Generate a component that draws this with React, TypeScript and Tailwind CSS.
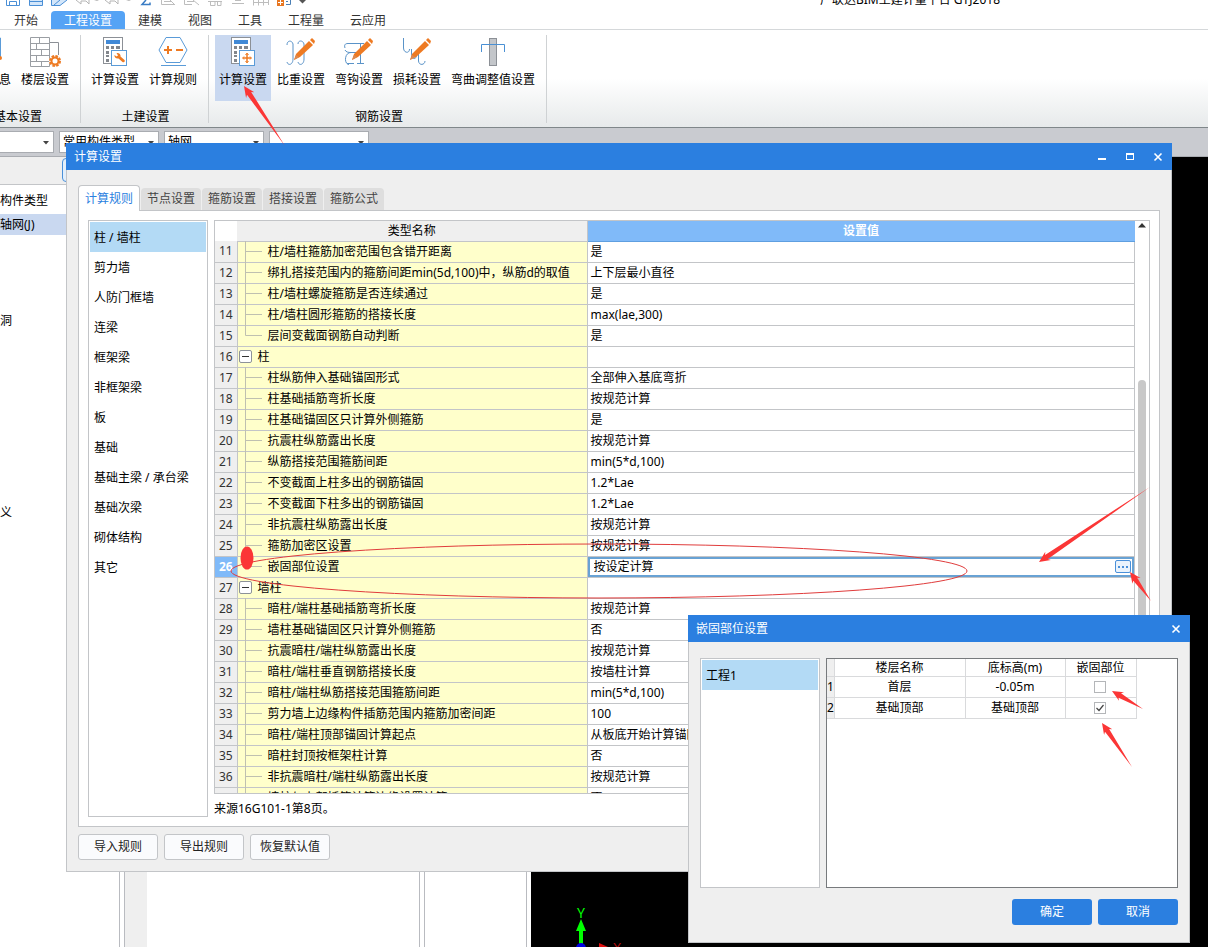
import { useState } from 'react';

interface SettingRow {
  no: number;
  name: string;
  value: string;
  group?: boolean;
  last?: boolean;
}

interface Point {
  x: number;
  y: number;
}

const menus = ['开始', '工程设置', '建模', '视图', '工具', '工程量', '云应用'];
const tabs = ['计算规则', '节点设置', '箍筋设置', '搭接设置', '箍筋公式'];
const categories = [
  '柱 / 墙柱',
  '剪力墙',
  '人防门框墙',
  '连梁',
  '框架梁',
  '非框架梁',
  '板',
  '基础',
  '基础主梁 / 承台梁',
  '基础次梁',
  '砌体结构',
  '其它',
];

const rows: SettingRow[] = [
  { no: 11, name: '柱/墙柱箍筋加密范围包含错开距离', value: '是' },
  { no: 12, name: '绑扎搭接范围内的箍筋间距min(5d,100)中，纵筋d的取值', value: '上下层最小直径' },
  { no: 13, name: '柱/墙柱螺旋箍筋是否连续通过', value: '是' },
  { no: 14, name: '柱/墙柱圆形箍筋的搭接长度', value: 'max(lae,300)' },
  { no: 15, name: '层间变截面钢筋自动判断', value: '是', last: true },
  { no: 16, name: '柱', value: '', group: true },
  { no: 17, name: '柱纵筋伸入基础锚固形式', value: '全部伸入基底弯折' },
  { no: 18, name: '柱基础插筋弯折长度', value: '按规范计算' },
  { no: 19, name: '柱基础锚固区只计算外侧箍筋', value: '是' },
  { no: 20, name: '抗震柱纵筋露出长度', value: '按规范计算' },
  { no: 21, name: '纵筋搭接范围箍筋间距', value: 'min(5*d,100)' },
  { no: 22, name: '不变截面上柱多出的钢筋锚固', value: '1.2*Lae' },
  { no: 23, name: '不变截面下柱多出的钢筋锚固', value: '1.2*Lae' },
  { no: 24, name: '非抗震柱纵筋露出长度', value: '按规范计算' },
  { no: 25, name: '箍筋加密区设置', value: '按规范计算' },
  { no: 26, name: '嵌固部位设置', value: '按设定计算', last: true },
  { no: 27, name: '墙柱', value: '', group: true },
  { no: 28, name: '暗柱/端柱基础插筋弯折长度', value: '按规范计算' },
  { no: 29, name: '墙柱基础锚固区只计算外侧箍筋', value: '否' },
  { no: 30, name: '抗震暗柱/端柱纵筋露出长度', value: '按规范计算' },
  { no: 31, name: '暗柱/端柱垂直钢筋搭接长度', value: '按墙柱计算' },
  { no: 32, name: '暗柱/端柱纵筋搭接范围箍筋间距', value: 'min(5*d,100)' },
  { no: 33, name: '剪力墙上边缘构件插筋范围内箍筋加密间距', value: '100' },
  { no: 34, name: '暗柱/端柱顶部锚固计算起点', value: '从板底开始计算锚固' },
  { no: 35, name: '暗柱封顶按框架柱计算', value: '否' },
  { no: 36, name: '非抗震暗柱/端柱纵筋露出长度', value: '按规范计算' },
  { no: 37, name: '墙柱与上部插筋计算边缘设置计算', value: '否' },
];

/* ---------- icons ---------- */

function QuickIcons() {
  return (
    <svg width="310" height="10" viewBox="0 0 310 10" className="shrink-0" fill="none" aria-hidden="true">
      <path d="M6.500 0V5.500H19.500V0M9.500 5V1.500H16.500V5" stroke="#4a8fd6" />
      <path d="M29.500 0V5.500H42.500V0" fill="#d3e6fa" stroke="#4a8fd6" />
      <path d="M29 1.500H43" stroke="#4a8fd6" />
      <path d="M51.500 0V5.500H60L67 0M54 5L60 0" fill="#d3e6fa" stroke="#4a8fd6" />
      <path d="M76 0L81 4V1H86L89 4V0" stroke="#b5b5b5" />
      <path d="M105 0L110 4V1H115L118 4V0" stroke="#b5b5b5" />
      <path d="M94 0h5l-2 1zM126 0h5l-2 1z" fill="#b5b5b5" />
      <path d="M146 0L142 4.500H150V2.500" stroke="#3a7cc4" strokeWidth="1.500" />
      <path d="M161.500 0V4.500H174M164 1.500H171M170 0L175 5M184.500 0V4.500H192M187 1.500H194M193 0L199 5" stroke="#bdbdbd" />
      <path d="M208 1.500H222M210.500 2V5.500H215V2M217.500 2V5.500H221V2M232 3.500H244M235 0.500H241M253.500 0V5.500M258.500 0V5.500M263.500 0V5.500M253 2.500H268M268.500 0V5" stroke="#bdbdbd" />
      <rect x="277" y="0" width="7" height="6" fill="#e87722" />
      <path d="M278 2.500H283M280.500 0V5" stroke="#fff" />
      <path d="M286 4.500H290.500V0M286 1.500H288" stroke="#4a7fb5" />
      <path d="M299 0H306L302.500 3.500Z" fill="#555" />
    </svg>
  );
}

function CalcIcon({ badge }: { badge: 'wrench' | 'move' }) {
  return (
    <svg width="32" height="32" viewBox="0 0 32 32" fill="none" aria-hidden="true">
      <rect x="4.500" y="2.500" width="19" height="26" fill="#fff" stroke="#8c9096" />
      <rect x="7" y="5" width="14" height="4" fill="#4189d6" />
      <path d="M7 11h3v3H7zM12 11h3v3h-3zM17 11h4v3h-4zM7 16h3v3H7zM12 16h3v3h-3zM7 20h3v2H7zM7 24h3v3H7z" fill="#82868c" />
      <rect x="12.500" y="15.500" width="15" height="15" fill="#fff" stroke="#5a9bd8" />
      {badge === 'wrench' ? (
        <path
          d="M17.500 18C20 17.500 22 19.500 21.500 21.500L25.500 25C26.500 26.500 25 28 23.500 27L19.500 23.500C17 24 15 22 15.500 20L17.500 21.500L19 20.500Z"
          fill="#ee7a22"
        />
      ) : (
        <g stroke="#ee7a22" strokeWidth="1.500">
          <path d="M20 19v8M16 23h8" />
          <path d="M18.500 20l1.500-2 1.500 2M18.500 26l1.500 2 1.500-2M17 21.500l-1.500 1.500 1.500 1.500M23 21.500l1.500 1.500-1.500 1.500" strokeWidth="1" />
        </g>
      )}
    </svg>
  );
}

function FloorIcon() {
  return (
    <svg width="32" height="32" viewBox="0 0 32 32" fill="none" aria-hidden="true">
      <path d="M1.500 2.500H20.500V31.500H1.500ZM1 8.500H20M1 14.500H20M1 20.500H20M1 26.500H20M10.500 2V8M7.500 8V14M12.500 14V20M7.500 20V26M12.500 26V31" stroke="#9a9ea3" />
      <path d="M21 7.500H29.500V20" stroke="#8c9096" />
      <circle cx="26" cy="26" r="6" fill="#f6f7f8" />
      <circle cx="26" cy="26" r="5" stroke="#ee7a22" strokeWidth="2" strokeDasharray="2.500 1.400" />
      <circle cx="26" cy="26" r="3.500" fill="#fff" stroke="#ee7a22" strokeWidth="2" />
    </svg>
  );
}

function RuleIcon() {
  return (
    <svg width="32" height="32" viewBox="0 0 32 32" fill="none" aria-hidden="true">
      <path d="M9 2.500H23L30 15L23 27.500H9L2 15ZM4 30.500H29" stroke="#5a9bd8" />
      <path d="M7 15H15M11 11V19M19 15H26" stroke="#ee7a22" strokeWidth="2" />
    </svg>
  );
}

function PencilIcon({ curve }: { curve: string }) {
  return (
    <svg width="32" height="32" viewBox="0 0 32 32" fill="none" aria-hidden="true">
      <path d={curve} stroke="#5a93c8" />
      <path d="M9 25L11 19L24 6L28 10L15 22Z" fill="#ee7a22" />
      <path d="M25 5L27 3L30 6L29 9Z" fill="#ee7a22" />
      <path d="M9 25L11 20L14 22Z" fill="#d98a55" />
    </svg>
  );
}

function BendIcon() {
  return (
    <svg width="32" height="32" viewBox="0 0 32 32" fill="none" aria-hidden="true">
      <rect x="12.500" y="3.500" width="7" height="27" fill="#c3c6ca" stroke="#8c9096" />
      <path d="M4.500 17V9.500H27.500V17" stroke="#4a90d4" />
    </svg>
  );
}

function ToolIcon({ name }: { name: string }) {
  switch (name) {
    case '楼层设置':
      return <FloorIcon />;
    case '计算规则':
      return <RuleIcon />;
    case '比重设置':
      return (
        <PencilIcon curve="M2 10C2 5 7 5 8 9V24C8 30 3 31 2 27M13 9C13 5 18 5 19 9V24C19 30 14 31 13 27" />
      );
    case '弯钩设置':
      return (
        <PencilIcon curve="M2 13C1 10 2 8.500 5 8.500H21M2 15C3 17 5 17.500 8 17.500H14M8 17.500C1 17.500 1 29.500 6 29.500M4 28.500H11M14 28.500H21M17.500 9V28" />
      );
    case '损耗设置':
      return <PencilIcon curve="M2.500 3V13C2.500 18 8.500 19 8.500 14M10.500 14V18C10.500 25 15 25 16 20M17.500 18V26C18 31 24 30 24 26" />;
    case '弯曲调整值设置':
      return <BendIcon />;
    default:
      return null;
  }
}

function CloseIcon() {
  return (
    <svg width="10" height="10" viewBox="0 0 10 10" fill="none" stroke="#fff" strokeWidth="1.600" aria-hidden="true">
      <path d="M1.500 1.500L8.500 8.500M8.500 1.500L1.500 8.500" />
    </svg>
  );
}

/* ---------- ribbon ---------- */

function ToolButton({ label, badge, active }: { label: string; badge?: 'wrench' | 'move'; active?: boolean }) {
  return (
    <button
      className={`flex h-[66px] min-w-14 shrink-0 flex-col items-center px-1 text-black ${active ? 'bg-[#c9d8f0]' : ''}`}
    >
      {badge ? <CalcIcon badge={badge} /> : <ToolIcon name={label} />}
      <span className="mt-[5px] leading-4 whitespace-nowrap">{label}</span>
    </button>
  );
}

function Ribbon() {
  return (
    <div className="flex h-[98px] shrink-0 border-b border-[#80878a] bg-linear-to-b from-white from-50% to-[#e7eaeb] pt-[5px] pb-1 text-black">
      <div className="flex w-[81px] justify-end overflow-hidden border-r border-[#cfd2d4]">
        <div className="flex w-[124px] shrink-0 flex-col">
          <div className="flex gap-[2px] pl-[3px]">
            <button className="flex h-[66px] w-14 flex-col items-center">
              <svg width="32" height="32" viewBox="0 0 32 32" fill="none" aria-hidden="true">
                <path d="M4 3H29.500V22H4" stroke="#5a9bd8" />
                <circle cx="29" cy="23" r="2" fill="#ee7a22" />
              </svg>
              <span className="mt-[5px] leading-4">工程信息</span>
            </button>
            <ToolButton label="楼层设置" />
          </div>
          <span className="mt-2 text-center leading-4">基本设置</span>
        </div>
      </div>
      <div className="flex w-32 flex-col border-r border-[#cfd2d4] pl-[6px]">
        <div className="flex gap-[2px]">
          <ToolButton label="计算设置" badge="wrench" />
          <ToolButton label="计算规则" />
        </div>
        <span className="mt-2 pr-1 text-center leading-4">土建设置</span>
      </div>
      <div className="flex flex-col border-r border-[#cfd2d4] pr-[7px] pl-[6px]">
        <div className="flex gap-[2px]">
          <ToolButton label="计算设置" badge="move" active />
          <ToolButton label="比重设置" />
          <ToolButton label="弯钩设置" />
          <ToolButton label="损耗设置" />
          <ToolButton label="弯曲调整值设置" />
        </div>
        <span className="mt-2 pl-1 text-center leading-4">钢筋设置</span>
      </div>
    </div>
  );
}

function Combo({ label, value, width }: { label: string; value: string; width: string }) {
  return (
    <div className={`relative h-[22px] shrink-0 border border-[#a9acb1] bg-white ${width}`}>
      <select aria-label={label} className="h-full w-full appearance-none bg-transparent pl-[3px] text-black">
        <option>{value}</option>
      </select>
      <svg width="6" height="4" viewBox="0 0 6 4" className="pointer-events-none absolute top-[9px] right-1" aria-hidden="true">
        <path d="M0 0H6L3 3.500Z" fill="#444" />
      </svg>
    </div>
  );
}

/* ---------- main dialog ---------- */

function SettingTable() {
  return (
    <table className="w-full table-fixed border-collapse text-black">
      <colgroup>
        <col className="w-[22px]" />
        <col className="w-[350px]" />
        <col />
      </colgroup>
      <thead>
        <tr className="h-5">
          <th className="bg-white p-0"></th>
          <th className="border-r border-b border-[#c3c5c8] bg-[#efefef] p-0 leading-4 font-normal">类型名称</th>
          <th className="border-b border-[#5f9fe0] bg-[#80baf9] p-0 leading-4 font-bold text-white">设置值</th>
        </tr>
      </thead>
      <tbody>
        {rows.map((row) => {
          const selected = row.no === 26;
          return (
            <tr key={row.no} className="h-[21px]">
              <td
                className={`border-r border-b border-[#c3c5c8] p-0 text-center leading-4 ${
                  selected ? 'bg-[#80baf9] font-bold text-white' : 'bg-[#efefef] text-[#333]'
                }`}
              >
                {row.no}
              </td>
              <td className="border-r border-b border-[#c3c5c8] bg-[#ffffcb] p-0">
                <div className="flex h-5 items-center">
                  {row.group ? (
                    <button
                      aria-label={`收起${row.name}`}
                      className="mr-[6px] ml-px flex h-[13px] w-[13px] items-center justify-center rounded-[2px] border border-[#8d9299] bg-white"
                    >
                      <span className="h-px w-[7px] bg-[#333]" />
                    </button>
                  ) : (
                    <svg width="30" height="21" viewBox="0 0 30 21" fill="none" className="shrink-0" aria-hidden="true">
                      <path d={row.last ? 'M7.500 0V10.500H24' : 'M7.500 0V21M7.500 10.500H24'} stroke="#bfc0b0" />
                    </svg>
                  )}
                  <span className="leading-4 whitespace-nowrap">{row.name}</span>
                </div>
              </td>
              <td className="border-r border-b border-[#c3c5c8] bg-white p-0">
                {selected ? (
                  <div className="flex h-5 items-center border-2 border-[#68a2d4] pr-px">
                    <input
                      aria-label={row.name}
                      defaultValue={row.value}
                      className="h-4 min-w-0 flex-1 bg-transparent pl-1 outline-none"
                    />
                    <button
                      aria-label="更多"
                      className="flex h-[13px] w-4 items-center justify-center gap-[2px] rounded-[2px] border border-[#4a90d9] bg-[#eaf3fc]"
                    >
                      <span className="h-[2px] w-[2px] bg-[#4a90d9]" />
                      <span className="h-[2px] w-[2px] bg-[#4a90d9]" />
                      <span className="h-[2px] w-[2px] bg-[#4a90d9]" />
                    </button>
                  </div>
                ) : (
                  <div className="h-4 pl-[3px] leading-4 whitespace-nowrap">{row.value}</div>
                )}
              </td>
            </tr>
          );
        })}
      </tbody>
    </table>
  );
}

function CalcDialog() {
  const [tab, setTab] = useState(0);
  const [category, setCategory] = useState(0);

  return (
    <section className="absolute top-[143px] right-9 left-[66px] border-r border-b border-l border-[#c3c5c8] bg-[#efefef]">
      <header className="-mx-px flex h-[27px] items-center bg-[#2b7fe0] pl-2 text-white">
        <h2 className="flex-1">计算设置</h2>
        <button aria-label="最小化" className="flex h-full w-7 items-center justify-center">
          <span className="mt-1 h-[2px] w-2 bg-white" />
        </button>
        <button aria-label="最大化" className="flex h-full w-7 items-center justify-center">
          <span className="h-[7px] w-2 border border-t-2 border-white" />
        </button>
        <button aria-label="关闭" className="flex h-full w-7 items-center justify-center">
          <CloseIcon />
        </button>
      </header>

      <div className="px-[11px] pt-[15px] pb-[11px]">
        <div className="flex items-end gap-px" role="tablist">
          {tabs.map((item, i) => (
            <button
              key={item}
              role="tab"
              aria-selected={i === tab}
              onClick={() => setTab(i)}
              className={
                i === tab
                  ? 'z-10 -mb-px h-[26px] w-[62px] rounded-t-sm border border-b-0 border-[#c3c5c8] bg-white text-[#2b7fe0]'
                  : 'h-[22px] w-[60px] rounded-t-sm bg-[#dedede] text-[#444]'
              }
            >
              {item}
            </button>
          ))}
        </div>

        <div className="flex border border-[#c3c5c8] bg-white p-[9px]">
          <ul className="w-[120px] shrink-0 border border-[#c3c5c8] p-px">
            {categories.map((item, i) => (
              <li key={item}>
                <button
                  onClick={() => setCategory(i)}
                  className={`h-[30px] w-full pt-0.5 pl-1 text-left whitespace-nowrap text-black ${
                    i === category ? 'bg-[#b3daf5]' : ''
                  }`}
                >
                  {item}
                </button>
              </li>
            ))}
          </ul>
          <div className="ml-[6px] min-w-0 flex-1">
            <div className="flex h-[574px] border border-[#c3c5c8]">
              <div className="min-w-0 flex-1 overflow-hidden">
                <SettingTable />
              </div>
              <div className="flex w-[14px] flex-col items-center">
                <svg width="8" height="5" viewBox="0 0 8 5" className="mt-[2px]" aria-hidden="true">
                  <path d="M0 4.500L4 0L8 4.500Z" fill="#333" />
                </svg>
                <div className="mt-[152px] h-[360px] w-2 rounded bg-[#c8c8c8]" />
              </div>
            </div>
            <p className="mt-[7px] h-4 leading-4 text-black">来源16G101-1第8页。</p>
          </div>
        </div>

        <div className="mt-[7px] flex gap-[6px]">
          {['导入规则', '导出规则', '恢复默认值'].map((item) => (
            <button key={item} className="h-[26px] w-20 rounded-[3px] border border-[#c3c5c8] bg-[#fafbfd] text-[#222]">
              {item}
            </button>
          ))}
        </div>
      </div>
    </section>
  );
}

/* ---------- small dialog ---------- */

function FloorCheck({ label, checked }: { label: string; checked: boolean }) {
  return (
    <label className="mx-auto grid w-3 place-items-center">
      <input
        type="checkbox"
        aria-label={label}
        defaultChecked={checked}
        className="peer col-start-1 row-start-1 h-3 w-3 appearance-none border border-[#b4b6b9] bg-white"
      />
      <svg
        width="8"
        height="8"
        viewBox="0 0 8 8"
        fill="none"
        className="pointer-events-none invisible col-start-1 row-start-1 peer-checked:visible"
        aria-hidden="true"
      >
        <path d="M0.500 4L3 6.500L7.500 1" stroke="#444" strokeWidth="1.200" />
      </svg>
    </label>
  );
}

function FixDialog() {
  const floors = [
    { name: '首层', level: '-0.05m', checked: false },
    { name: '基础顶部', level: '基础顶部', checked: true },
  ];

  return (
    <section className="absolute top-[615px] right-[18px] w-[502px] border-r border-b border-l border-[#c3c5c8] bg-[#efefef]">
      <header className="-mx-px flex h-[27px] items-center bg-[#2b7fe0] pl-2 text-white">
        <h2 className="flex-1">嵌固部位设置</h2>
        <button aria-label="关闭" className="flex h-full w-7 items-center justify-center">
          <CloseIcon />
        </button>
      </header>
      <div className="px-[11px] pt-4 pb-[17px]">
        <div className="flex h-[230px] gap-[6px]">
          <ul className="w-[120px] shrink-0 border border-[#c3c5c8] bg-white p-px">
            <li>
              <button className="h-[30px] w-full bg-[#b3daf5] pt-0.5 pl-1 text-left text-black">工程1</button>
            </li>
          </ul>
          <div className="min-w-0 flex-1 border border-[#777a7d] bg-white">
            <table className="w-[309px] table-fixed border-collapse text-center text-black">
              <colgroup>
                <col className="w-[7px]" />
                <col className="w-[131px]" />
                <col className="w-[100px]" />
                <col className="w-[71px]" />
              </colgroup>
              <thead>
                <tr className="h-[17px]">
                  <th className="border-r border-b border-[#d9dadc] bg-[#efefef] p-0"></th>
                  <th className="border-r border-b border-[#d9dadc] p-0 pt-px leading-4 font-normal">楼层名称</th>
                  <th className="border-r border-b border-[#d9dadc] p-0 pt-px leading-4 font-normal">底标高(m)</th>
                  <th className="border-r border-b border-[#d9dadc] p-0 pt-px leading-4 font-normal">嵌固部位</th>
                </tr>
              </thead>
              <tbody>
                {floors.map((floor, i) => (
                  <tr key={floor.name} className="h-[21px]">
                    <td className="border-r border-b border-[#d9dadc] bg-[#efefef] p-0 leading-4">{i + 1}</td>
                    <td className="border-r border-b border-[#d9dadc] p-0 leading-4">{floor.name}</td>
                    <td className="border-r border-b border-[#d9dadc] p-0 leading-4">{floor.level}</td>
                    <td className="border-r border-b border-[#d9dadc] p-0 pr-0.5">
                      <FloorCheck label={`${floor.name}嵌固部位`} checked={floor.checked} />
                    </td>
                  </tr>
                ))}
              </tbody>
            </table>
          </div>
        </div>
        <div className="mt-[11px] flex justify-end gap-[6px]">
          <button className="h-[26px] w-20 rounded-[3px] bg-[#2b7fe0] text-white">确定</button>
          <button className="h-[26px] w-20 rounded-[3px] bg-[#2b7fe0] text-white">取消</button>
        </div>
      </div>
    </section>
  );
}

/* ---------- red marks over the windows ---------- */

function Arrow({ tip, tail }: { tip: Point; tail: Point }) {
  const len = Math.hypot(tail.x - tip.x, tail.y - tip.y);
  const ux = (tail.x - tip.x) / len;
  const uy = (tail.y - tip.y) / len;
  const at = (along: number, side: number) => `${tip.x + ux * along - uy * side},${tip.y + uy * along + ux * side}`;
  return <polygon points={[at(0, 0), at(11, 5), at(9, 2.5), at(len, 0), at(9, -2.5), at(11, -5)].join(' ')} />;
}

function Marks() {
  return (
    <svg width="1208" height="947" viewBox="0 0 1208 947" className="pointer-events-none absolute top-0 left-0" fill="#fb3636" aria-hidden="true">
      <Arrow tip={{ x: 244, y: 86 }} tail={{ x: 285, y: 146 }} />
      <Arrow tip={{ x: 1039, y: 562 }} tail={{ x: 1150, y: 487 }} />
      <Arrow tip={{ x: 1130, y: 572 }} tail={{ x: 1151, y: 601 }} />
      <Arrow tip={{ x: 1112, y: 691 }} tail={{ x: 1143, y: 709 }} />
      <Arrow tip={{ x: 1102, y: 723 }} tail={{ x: 1132, y: 767 }} />
      <ellipse cx="599" cy="571" rx="368" ry="27" fill="none" stroke="#e03c3c" />
      <ellipse cx="247" cy="558" rx="6.500" ry="11.500" />
    </svg>
  );
}

export default function App() {
  return (
    <div className="relative flex h-screen flex-col overflow-hidden bg-white font-['Noto_Sans','Noto_Sans_CJK_SC',sans-serif] text-[12px] leading-4 text-[#222]">
      <div className="flex h-[11px] shrink-0 items-start overflow-hidden">
        <QuickIcons />
        <h1 className="-mt-2 ml-[510px] whitespace-nowrap text-black">广联达BIM土建计量平台 GTJ2018</h1>
      </div>

      <nav className="flex h-[19px] shrink-0 border-b border-[#d5d8da] pl-px">
        {menus.map((item) => (
          <button
            key={item}
            className={`px-[13px] pt-0.5 whitespace-nowrap ${
              item === '工程设置' ? 'rounded-t-sm bg-[#55a3f5] text-white' : 'text-[#333]'
            }`}
          >
            {item}
          </button>
        ))}
      </nav>

      <Ribbon />

      <div className="flex h-[29px] shrink-0 items-start border-b border-[#a9acb1] bg-[#c9cbd0] pt-[3px]">
        <Combo label="楼层" value="" width="w-[54px] border-l-0" />
        <div className="ml-[5px] flex gap-[5px]">
          <Combo label="构件分类" value="常用构件类型" width="w-[100px]" />
          <Combo label="构件类型" value="轴网" width="w-[100px]" />
          <Combo label="构件" value="" width="w-[100px]" />
        </div>
      </div>

      <main className="flex min-h-0 flex-1">
        <aside className="w-[120px] border-r border-[#b9bbc0] bg-white text-black">
          <div className="flex h-7 border-b border-[#c3c5c8] bg-[#efefef] pl-[62px]">
            <span className="mt-px h-6 w-10 rounded-sm border border-[#4a90d9] bg-[#e3effb]" />
          </div>
          <p className="mt-2 leading-4">构件类型</p>
          <p className="mt-[5px] h-[21px] bg-[#c9d8f0] leading-[21px]">轴网(J)</p>
          <p className="mt-[78px] leading-4">洞</p>
          <p className="mt-44 leading-4">义</p>
        </aside>
        <div className="ml-1 w-[296px] border-x border-[#b9bbc0] bg-white">
          <div className="h-full w-[22px] bg-[#efefef]" />
        </div>
        <div className="ml-1 w-[103px] border-x border-[#b9bbc0] bg-white" />
        <div className="ml-1 flex flex-1 items-end bg-black">
          <svg width="120" height="47" viewBox="531 900 120 47" className="text-[14px]" aria-hidden="true">
            <text x="581" y="918" textAnchor="middle" fill="#00ff00">
              Y
            </text>
            <path d="M581 919L586 931H583V944H579V931H576Z" fill="#00ff00" />
            <circle cx="581" cy="948" r="5" fill="#0000e0" />
            <path d="M599 943L608 947H599Z" fill="#e01010" />
            <text x="617" y="953" textAnchor="middle" fill="#b01010">
              X
            </text>
          </svg>
        </div>
      </main>

      <CalcDialog />
      <FixDialog />
      <Marks />
    </div>
  );
}
